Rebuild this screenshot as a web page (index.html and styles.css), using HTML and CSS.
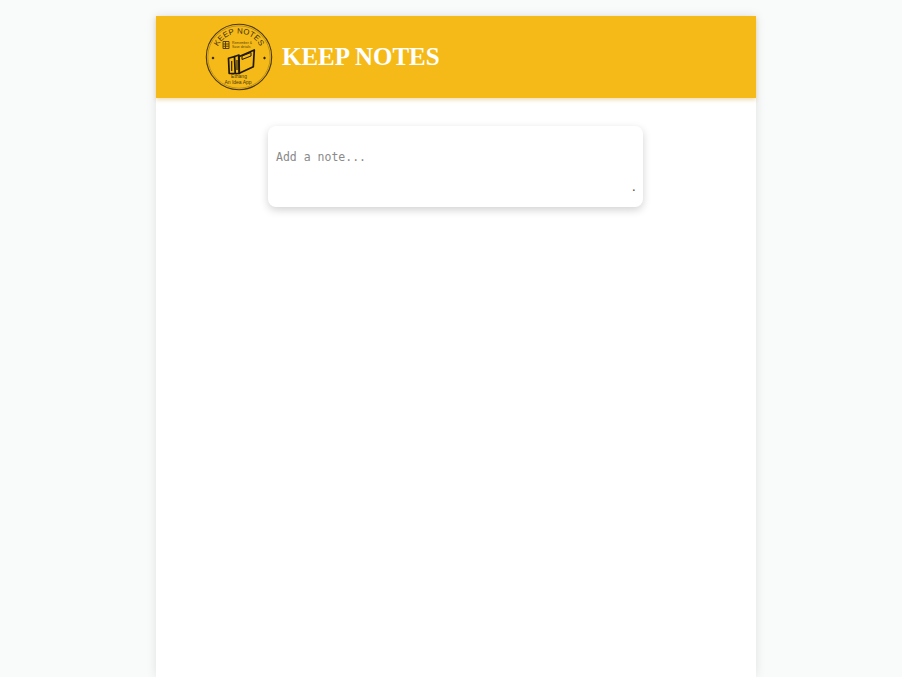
FILE: index.html
```html
<!DOCTYPE html>
<html lang="en">
<head>
<meta charset="utf-8">
<title>Keep Notes</title>
<link rel="stylesheet" href="styles.css">
</head>
<body>
<div class="app">
  <header class="header">
    <svg class="logo" viewBox="0 0 68 68" width="68" height="68" aria-label="Keep Notes logo">
      <defs>
        <path id="arcTop" d="M10.500 34a23.500 23.500 0 0 1 47 0"/>
      </defs>
      <circle cx="34" cy="34" r="32.700" fill="none" stroke="#4a3810" stroke-width="1.100"/>
      <circle cx="34" cy="34" r="31.200" fill="none" stroke="#8a6a14" stroke-width=".5"/>
      <text class="logo-arc"><textPath href="#arcTop" startOffset="50%" text-anchor="middle">KEEP NOTES</textPath></text>
      <path d="M18 18.500h6v7h-6z M18 21h6 M18 23.200h6 M20.500 18.500v7" fill="none" stroke="#4a3810" stroke-width=".9"/>
      <text class="logo-tiny" x="27" y="20.500">Remember &amp;</text>
      <text class="logo-tiny" x="27" y="25">Save details</text>
      <path d="M8 33.500l1.500 1.500-1.500 1.500-1.500-1.500z M59.500 33.500l1.500 1.500-1.500 1.500-1.500-1.500z" fill="#2a2008"/>
      <g fill="none" stroke="#211907" stroke-width="1.700" stroke-linejoin="round">
        <path d="M23.500 35.300l6-1.800.7 16.800-6 .2z"/>
        <path d="M29.500 33.500l4.500-1.500.3 18.300-4.100.2"/>
        <path d="M33.700 33.700L49.300 27l-1 16.700-14 6.600z"/>
        <path d="M37 33l9-3.500v3.500l-9 3.500z" stroke-width="1"/>
        <path d="M26.700 38v10M32 37v10" stroke-width="1.100"/>
      </g>
      <text class="logo-small" x="34" y="55" text-anchor="middle">Ethang</text>
      <text class="logo-small" x="33" y="60.500" text-anchor="middle">An Idea App</text>
    </svg>
    <h1 class="title">KEEP NOTES</h1>
  </header>
  <main class="content">
    <form class="note-form">
      <textarea class="note-input" placeholder="Add a note..." rows="2"></textarea>
      <span class="note-action">.</span>
    </form>
  </main>
</div>
</body>
</html>
```
FILE: styles.css
```css
html, body {
  height: 100%;
}
body {
  margin: 0;
  background: #f9fafa;
  overflow: hidden;
}
.app {
  width: 600px;
  min-height: 661px;
  margin: 16px 0 0 156px;
  background: #fff;
  box-shadow: 0 0 10px rgba(0, 0, 0, 0.1);
}
.header {
  box-sizing: border-box;
  height: 82px;
  display: flex;
  align-items: center;
  gap: 9px;
  padding: 0 0 0 49px;
  background: #f6ba18;
  box-shadow: 0 2px 4px rgba(215, 170, 60, 0.4);
}
.logo {
  flex: none;
}
.logo-arc {
  font: 7.800px "Liberation Sans", sans-serif;
  letter-spacing: 0.2px;
  fill: #3a2c10;
}
.logo-tiny {
  font: 3.400px "Liberation Sans", sans-serif;
  fill: #5a4510;
}
.logo-small {
  font: 5px "Liberation Sans", sans-serif;
  fill: #4a3810;
}
.title {
  margin: 0;
  font: bold 25px "Liberation Serif", serif;
  color: #fff;
}
.content {
  padding-top: 28px;
}
.note-form {
  position: relative;
  box-sizing: border-box;
  width: 375px;
  height: 81px;
  margin-left: 112px;
  border-radius: 8px;
  background: #fff;
  box-shadow: 0 3px 8px rgba(0, 0, 0, 0.18);
}
.note-input {
  display: block;
  box-sizing: border-box;
  width: 100%;
  height: 60px;
  padding: 24px 8px 0;
  border: 0;
  outline: 0;
  resize: none;
  background: transparent;
  font: 11.500px/1.300 "DejaVu Sans Mono", monospace;
  color: #333;
}
.note-input::placeholder {
  color: #8a8a8a;
  opacity: 1;
}
.note-action {
  position: absolute;
  right: 6px;
  bottom: 14px;
  font: 11px/1 "DejaVu Sans Mono", monospace;
  color: #555;
}
```
